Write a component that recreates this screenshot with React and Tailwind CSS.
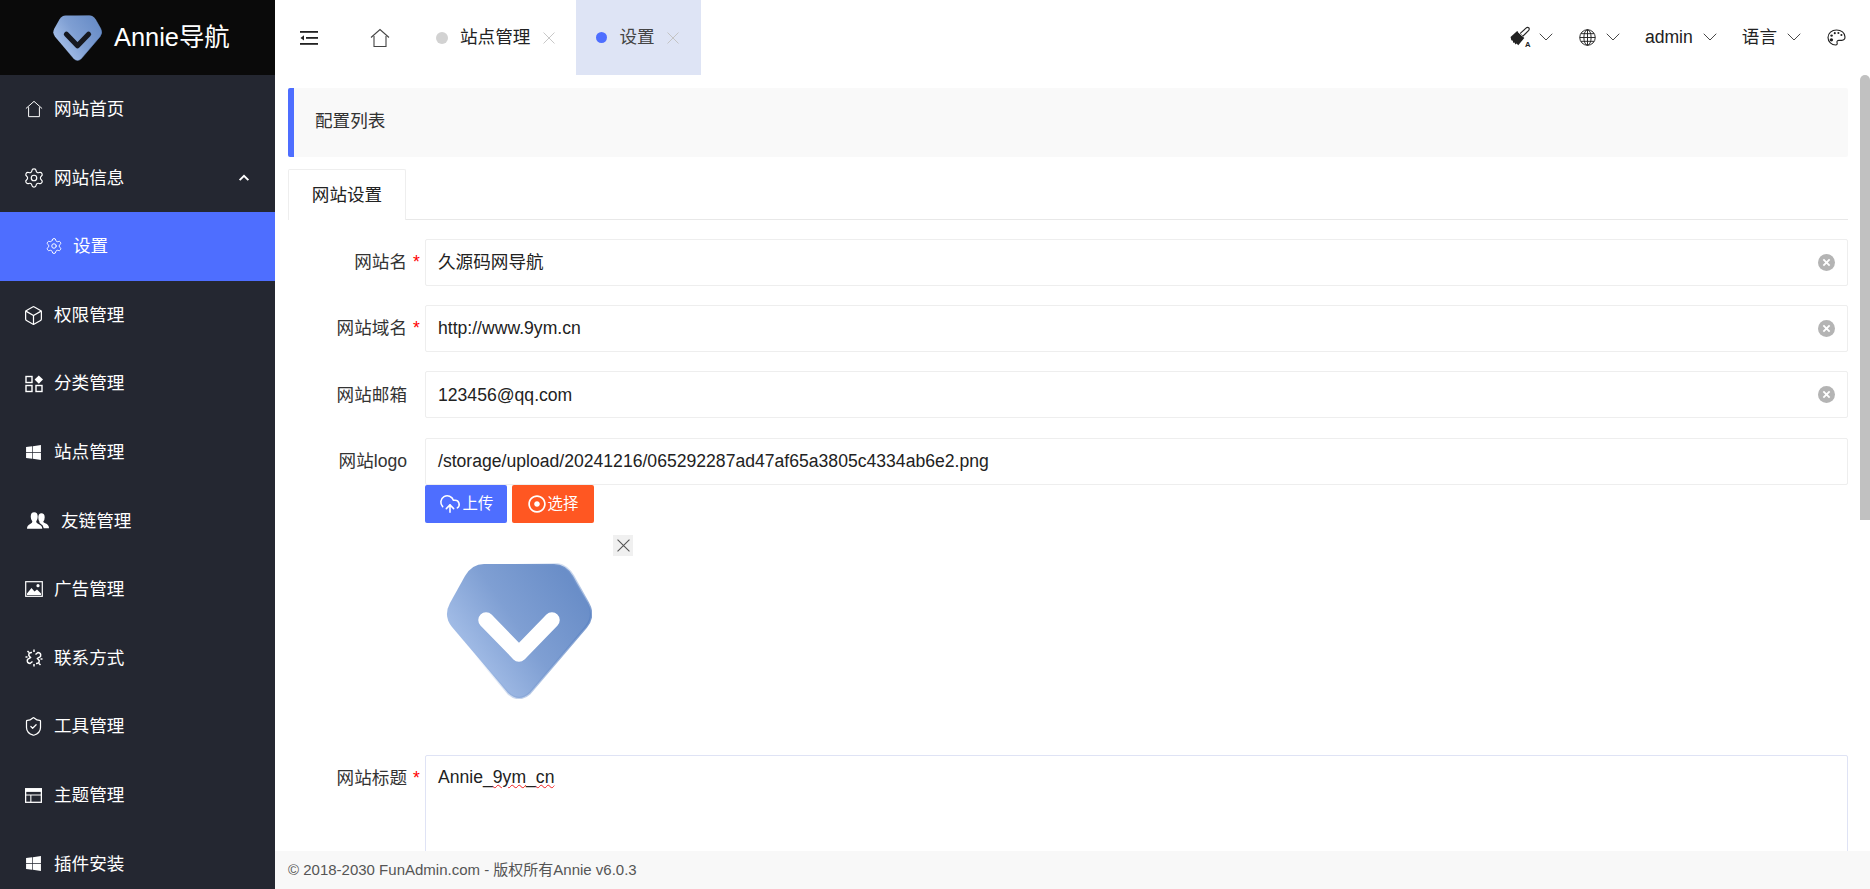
import { useId } from "react";
import { ChevronDown, Settings, Box, ShieldCheck, CloudUpload } from "lucide-react";
import { FaWindows, FaRegDotCircle } from "react-icons/fa";

const font = "font-['Liberation_Sans','Noto_Sans_CJK_SC',sans-serif]";

function LogoMark({ className, cut }) {
  const id = useId();
  const shape = "M38 1H108Q120 1 127 13L142 40Q149 53 140 64L84 130Q73 140 62 130L6 64Q-3 53 4 40L19 13Q26 1 38 1Z";
  return (
    <svg viewBox="0 0 146 136" className={className}>
      <defs>
        <linearGradient id={`${id}f`} x1="0.08" y1="0.72" x2="0.9" y2="0.2">
          <stop offset="0" stopColor="#a9c2ea" />
          <stop offset="0.5" stopColor="#7f9fd3" />
          <stop offset="1" stopColor="#6a8ec8" />
        </linearGradient>
        <linearGradient id={`${id}e`} x1="0.3" y1="0.4" x2="1" y2="0.7">
          <stop offset="0" stopColor="#8aa8d8" stopOpacity="0" />
          <stop offset="0.6" stopColor="#7f9fd3" stopOpacity="0.5" />
          <stop offset="1" stopColor="#4370b8" />
        </linearGradient>
      </defs>
      <path d={shape} fill={`url(#${id}f)`} stroke={`url(#${id}e)`} strokeWidth="2.5" />
      <path d="M40 57L73 91L106 57" fill="none" stroke={cut} strokeWidth="15.5" strokeLinecap="round" strokeLinejoin="round" />
    </svg>
  );
}

function HomeIcon({ className }) {
  return (
    <svg viewBox="0 0 20 20" fill="none" stroke="currentColor" strokeWidth="1.1" className={className}>
      <path d="M1 9.5L10 1.5L19 9.5" />
      <path d="M4 8V18.5H16V8" />
    </svg>
  );
}

function GridIcon({ className }) {
  return (
    <svg viewBox="0 0 18 18" className={className}>
      <g fill="none" stroke="currentColor" strokeWidth="1.4">
        <rect x="1" y="1.5" width="6" height="6" />
        <rect x="1" y="10.5" width="6" height="6" />
        <rect x="11" y="10.5" width="6" height="6" />
      </g>
      <path d="M13.8 0.5L18 4.6L13.8 8.7L9.6 4.6Z" fill="currentColor" />
    </svg>
  );
}

function UsersIcon({ className }) {
  return (
    <svg viewBox="0 0 23 17" className={className} fill="currentColor">
      <path d="M15 1Q18.5 1 18.5 5.2Q18.5 8 17 9.6Q17 10.8 19 11.5Q23 13 23 16.5H17.5Q17 13.5 14.2 12Q12.6 11 13 9.8Q11.8 8 11.8 5Q12 1 15 1Z" />
      <path d="M7.5 0Q11.2 0 11.2 4.6Q11.2 7.8 9.6 9.6Q9.6 11 11.5 11.8Q15.8 13.4 16 17H0Q0 13.4 3.7 11.8Q5.6 11 5.6 9.6Q3.9 7.8 3.9 4.6Q3.9 0 7.5 0Z" />
    </svg>
  );
}

function PictureIcon({ className }) {
  return (
    <svg viewBox="0 0 18 16" className={className}>
      <rect x="0.7" y="0.7" width="16.6" height="14.6" fill="none" stroke="currentColor" strokeWidth="1.2" />
      <path d="M2 14V12.5L6.5 7L9.5 10.5L12 8.5L16 12.5V14Z" fill="currentColor" />
      <circle cx="13" cy="4.7" r="1.6" fill="currentColor" />
    </svg>
  );
}

function LinkIcon({ className }) {
  return (
    <svg viewBox="0 0 18 18" fill="none" stroke="currentColor" strokeWidth="1.5" className={className}>
      <path d="M7 3.5Q3.5 3.2 3.8 6.5L5.5 8.5L2.5 10.5Q1.5 14 5 14.5L7.5 12.5" />
      <path d="M11 14.5Q14.5 14.8 14.2 11.5L12.5 9.5L15.5 7.5Q16.5 4 13 3.5L10.5 5.5" />
      <path d="M9 0.5V3M9 15V17.5M0.5 8H2.5M15.5 10H17.5M2.5 2L4 3.5M14 14.5L15.5 16" />
    </svg>
  );
}

function BrowserIcon({ className }) {
  return (
    <svg viewBox="0 0 16 14" className={className}>
      <rect x="0.6" y="0.6" width="14.8" height="12.8" fill="none" stroke="currentColor" strokeWidth="1.2" />
      <rect x="0.6" y="0.6" width="14.8" height="3" fill="currentColor" />
      <path d="M0.6 6.6H15.4M5.5 6.6V13.4" stroke="currentColor" strokeWidth="1" />
    </svg>
  );
}

function FoldIcon({ className }) {
  return (
    <svg viewBox="0 0 18 14" className={className} fill="currentColor">
      <rect x="0" y="0" width="18" height="1.8" />
      <rect x="6" y="6" width="12" height="1.8" />
      <rect x="0" y="12" width="18" height="1.8" />
      <path d="M4 4.2V9.6L0.5 6.9Z" />
    </svg>
  );
}

function BrushIcon({ className }) {
  return (
    <svg viewBox="0 0 20 20" className={className}>
      <path d="M0.5 10L6.5 4.5L13 11L7.5 17.5L6 16L5 16.8L4 15L2.8 15.2L2.6 13.4L1.2 13Z" fill="currentColor" />
      <path d="M9 7L11.5 9.5L17 4Q18 2.6 17 1.6Q15.8 0.8 14.5 2Z" fill="none" stroke="currentColor" strokeWidth="1" />
      <path d="M7.5 5.5L11.5 9.5" stroke="#fff" strokeWidth="0.8" />
      <text x="13.6" y="19.5" fontSize="7" fontWeight="700" fill="currentColor">A</text>
    </svg>
  );
}

function GlobeIcon({ className }) {
  return (
    <svg viewBox="0 0 16 16" fill="none" stroke="currentColor" strokeWidth="0.9" className={className}>
      <circle cx="8" cy="8" r="7.3" />
      <ellipse cx="8" cy="8" rx="3.4" ry="7.3" />
      <path d="M8 0.7V15.3M0.7 8H15.3M1.7 4.4H14.3M1.7 11.6H14.3" />
    </svg>
  );
}

function PaletteIcon({ className }) {
  return (
    <svg viewBox="0 0 20 18" className={className}>
      <path
        d="M10 1C5 1 1 4.6 1 9C1 13.5 5 17 9 17C10.8 17 11 15.8 10.6 14.6C10.1 13 11 12 12.6 12H15.5C17.8 12 19 10.8 19 8.6C19 4 15 1 10 1Z"
        fill="none"
        stroke="currentColor"
        strokeWidth="1.2"
      />
      <g fill="currentColor">
        <circle cx="4.6" cy="11.5" r="1.8" />
        <circle cx="4.8" cy="7" r="1.3" />
        <circle cx="8.2" cy="4.4" r="1.1" />
        <circle cx="12" cy="4.2" r="1.1" />
        <circle cx="15.2" cy="6.4" r="1.1" />
      </g>
    </svg>
  );
}

function ClearButton() {
  return (
    <span className="flex h-[17px] w-[17px] shrink-0 items-center justify-center rounded-full bg-[#b4b4b4]">
      <svg viewBox="0 0 10 10" className="h-[9px] w-[9px]" stroke="#fff" strokeWidth="2">
        <path d="M1.5 1.5L8.5 8.5M8.5 1.5L1.5 8.5" />
      </svg>
    </span>
  );
}

function ThinX({ className }) {
  return (
    <svg viewBox="0 0 12 12" stroke="currentColor" strokeWidth="1" className={className}>
      <path d="M0.5 0.5L11.5 11.5M11.5 0.5L0.5 11.5" />
    </svg>
  );
}

const menu = [
  { label: "网站首页", icon: <HomeIcon className="h-[18px] w-[18px]" /> },
  { label: "网站信息", icon: <Settings className="-ml-[2px] h-[22px] w-[22px]" strokeWidth={1.3} />, open: true },
  { label: "设置", icon: <Settings className="h-[18px] w-[18px]" strokeWidth={1.3} />, active: true },
  { label: "权限管理", icon: <Box className="-ml-[2px] h-[21px] w-[21px]" strokeWidth={1.4} /> },
  { label: "分类管理", icon: <GridIcon className="h-[18px] w-[18px]" /> },
  { label: "站点管理", icon: <FaWindows className="h-[17px] w-[17px]" /> },
  { label: "友链管理", icon: <UsersIcon className="h-[17px] w-[22px]" />, wide: true },
  { label: "广告管理", icon: <PictureIcon className="h-[16px] w-[18px]" /> },
  { label: "联系方式", icon: <LinkIcon className="h-[18px] w-[18px]" /> },
  { label: "工具管理", icon: <ShieldCheck className="-ml-[2px] h-[21px] w-[21px]" strokeWidth={1.4} /> },
  { label: "主题管理", icon: <BrowserIcon className="h-[15px] w-[17px]" /> },
  { label: "插件安装", icon: <FaWindows className="h-[17px] w-[17px]" /> },
];

function Sidebar() {
  return (
    <aside className="flex h-full w-[275px] shrink-0 flex-col overflow-hidden bg-[#242731] text-white">
      <div className="flex h-[75px] shrink-0 items-center bg-[#0a0a0a] pl-[53px]">
        <LogoMark className="h-[46px] w-[49px]" cut="#16181f" />
        <span className="ml-[12px] text-[25.4px]">Annie导航</span>
      </div>
      {menu.map((item) =>
        item.active ? (
          <div key={item.label} className="flex h-[68.6px] shrink-0 items-center bg-[#4e6eff] pl-[45px]">
            {item.icon}
            <span className="ml-[10px]">{item.label}</span>
          </div>
        ) : (
          <div key={item.label} className="flex h-[68.6px] shrink-0 items-center pl-[25px]">
            <span className={item.wide ? "flex w-[36px] shrink-0 pl-[2px]" : "flex w-[29px] shrink-0"}>{item.icon}</span>
            <span>{item.label}</span>
            {item.open && (
              <svg viewBox="0 0 12 8" className="ml-auto mr-[25px] h-[7px] w-[12px]" fill="none" stroke="currentColor" strokeWidth="2.2">
                <path d="M1 7L6 2L11 7" />
              </svg>
            )}
          </div>
        )
      )}
    </aside>
  );
}

function Caret() {
  return <ChevronDown className="-mx-[6px] h-[24px] w-[24px] text-[#333]" strokeWidth={0.9} />;
}

function Header() {
  return (
    <header className="flex h-[75px] shrink-0 items-center bg-white text-[#222]">
      <FoldIcon className="ml-[25px] h-[14px] w-[18px]" />
      <HomeIcon className="ml-[52px] h-[20px] w-[20px] text-[#444]" />
      <div className="ml-[46px] flex h-full items-center">
        <span className="h-[12px] w-[12px] rounded-full bg-[#d2d2d2]" />
        <span className="ml-[12px]">站点管理</span>
        <ThinX className="ml-[13px] h-[12px] w-[12px] text-[#c8c8c8]" />
      </div>
      <div className="ml-[21px] flex h-full items-center bg-[#dee4f5] pl-[20px] pr-[22px] text-[#444]">
        <span className="h-[11px] w-[11px] rounded-full bg-[#4e6eff]" />
        <span className="ml-[12px]">设置</span>
        <ThinX className="ml-[12px] h-[12px] w-[12px] text-[#c4c4c4]" />
      </div>
      <div className="ml-auto flex items-center pr-[24px]">
        <BrushIcon className="h-[22px] w-[22px]" />
        <span className="ml-[8px] flex"><Caret /></span>
        <GlobeIcon className="ml-[27px] h-[17px] w-[17px]" />
        <span className="ml-[11px] flex"><Caret /></span>
        <span className="ml-[26px]">admin</span>
        <span className="ml-[11px] flex"><Caret /></span>
        <span className="ml-[26px]">语言</span>
        <span className="ml-[11px] flex"><Caret /></span>
        <PaletteIcon className="ml-[27px] h-[17px] w-[19px]" />
      </div>
    </header>
  );
}

function FieldLabel({ text, required }) {
  return (
    <label className="flex h-[47px] w-[137px] shrink-0 items-center justify-end text-[#333]">
      <span>{text}</span>
      <span className="w-[18px] pl-[6px] text-[#f00]">{required ? "*" : ""}</span>
    </label>
  );
}

function TextField({ label, value, required, clearable = true }) {
  return (
    <div className="flex">
      <FieldLabel text={label} required={required} />
      <div className="flex h-[47px] flex-1 items-center rounded-[2px] border border-[#eeeeee] pl-[12px] pr-[12px] text-[#222]">
        <span className="flex-1">{value}</span>
        {clearable && <ClearButton />}
      </div>
    </div>
  );
}

function SettingsForm() {
  return (
    <div className="flex flex-col pt-[19px]">
      <div className="flex flex-col gap-[19.2px]">
        <TextField label="网站名" value="久源码网导航" required />
        <TextField label="网站域名" value="http://www.9ym.cn" required />
        <TextField label="网站邮箱" value="123456@qq.com" />
        <TextField label="网站logo" value="/storage/upload/20241216/065292287ad47af65a3805c4334ab6e2.png" clearable={false} />
      </div>
      <div className="ml-[137px] flex gap-[5px] text-[15.4px] text-white">
        <button className="flex h-[38px] w-[82px] items-center justify-center gap-[2px] rounded-[2px] bg-[#4e6eff]">
          <CloudUpload className="h-[22px] w-[22px]" strokeWidth={1.7} />
          上传
        </button>
        <button className="flex h-[38px] w-[82px] items-center justify-center gap-[2px] rounded-[2px] bg-[#ff5722]">
          <FaRegDotCircle className="h-[18px] w-[18px]" />
          选择
        </button>
      </div>
      <div className="ml-[158px] mt-[12px] flex items-start">
        <LogoMark className="mt-[28px] h-[136px] w-[146px]" cut="#ffffff" />
        <span className="ml-[21px] flex h-[21px] w-[20px] items-center justify-center bg-[#f0f0f0] text-[#555]">
          <ThinX className="h-[13px] w-[13px]" />
        </span>
      </div>
      <div className="mt-[56px] flex">
        <FieldLabel text="网站标题" required />
        <div className="h-[160px] flex-1 rounded-[2px] border border-[#dfe3f5] px-[12px] pt-[8px] text-[#222]">
          Annie_<span className="underline decoration-[#f02020] decoration-wavy decoration-1">9ym</span>_
          <span className="underline decoration-[#f02020] decoration-wavy decoration-1">cn</span>
        </div>
      </div>
    </div>
  );
}

export default function App() {
  return (
    <div className={`flex h-screen w-full overflow-hidden bg-white text-[17.6px] ${font}`}>
      <Sidebar />
      <div className="flex min-w-0 flex-1 flex-col">
        <Header />
        <div className="flex min-h-0 flex-1">
          <main className="min-w-0 flex-1 overflow-hidden pl-[13px] pr-[12px] pt-[13px]">
            <div className="flex h-[69px] items-center rounded-[2px] border-l-[6px] border-[#4e6eff] bg-[#f9f9f9] pb-[2px] pl-[21px] text-[#333]">
              配置列表
            </div>
            <div className="mt-[12px] flex h-[51px] border-b border-[#e8e8e8]">
              <div className="flex h-[51px] w-[118px] items-center justify-center rounded-t-[2px] border border-b-0 border-[#eeeeee] bg-white text-[#222]">
                网站设置
              </div>
            </div>
            <SettingsForm />
          </main>
          <div className="w-[10px] shrink-0 bg-white">
            <div className="h-[445px] rounded-t-[5px] bg-[#c1c1c1]" />
          </div>
        </div>
        <footer className="flex h-[38px] shrink-0 items-center bg-[#f8f8f8] pl-[13px] text-[15px] text-[#555]">
          © 2018-2030 FunAdmin.com - 版权所有Annie v6.0.3
        </footer>
      </div>
    </div>
  );
}
